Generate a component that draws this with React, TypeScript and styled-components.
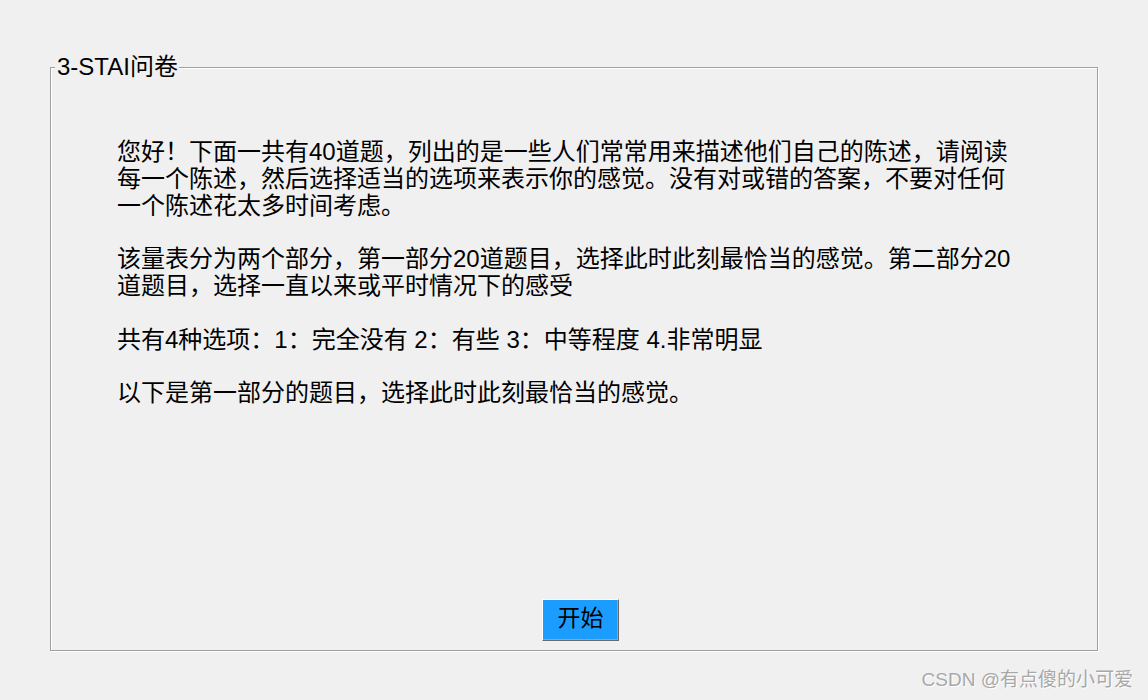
import React from 'react';
import styled, { createGlobalStyle } from 'styled-components';

const GlobalStyle = createGlobalStyle`
  html, body {
    margin: 0;
    padding: 0;
    background: #f0f0f0;
  }
  body {
    font-family: "Liberation Sans", "Noto Sans CJK SC", sans-serif;
    color: #000;
  }
`;

const Page = styled.div`
  position: relative;
  box-sizing: border-box;
  height: 700px;
  padding: 55px 50px 49px 50px;
  display: flex;
  flex-direction: column;
  overflow: hidden;
`;

const GroupBox = styled.fieldset`
  flex: 1;
  margin: 0;
  padding: 0;
  min-width: 0;
  border: 1px solid #a0a0a0;
  box-shadow: inset 1px 1px 0 #fff, 1px 1px 0 #fff;
  display: flex;
  flex-direction: column;
`;

const Title = styled.legend`
  margin-left: 4px;
  padding: 0 1px 0 2px;
  font-size: 24px;
  line-height: 24px;
  background: #f0f0f0;
`;

const Intro = styled.div`
  margin-top: 60px;
  padding-left: 66px;
  font-size: 24px;
  line-height: 26.8px;
`;

const Para = styled.p`
  margin: 0 0 26.8px 0;
  white-space: nowrap;
`;

const StartButton = styled.button`
  margin: auto 0 9px 491px;
  align-self: flex-start;
  width: 77px;
  height: 42px;
  padding: 0 0 4px 0;
  font-family: "Liberation Sans", "Noto Sans CJK SC", sans-serif;
  font-size: 23px;
  line-height: 28px;
  color: #000;
  background: #1a9dff;
  border-top: 1px solid #fff;
  border-left: 1px solid #fff;
  border-right: 1px solid #696969;
  border-bottom: 1px solid #696969;
  box-shadow: inset -1px -1px 0 #a0a0a0;
  cursor: pointer;
`;

const Watermark = styled.div`
  position: absolute;
  right: 15px;
  bottom: 8px;
  font-size: 19px;
  line-height: 24px;
  color: #a8a8a8;
  text-shadow: 1px 1px 0 #fff;
  white-space: nowrap;
`;

const paragraphs: string[][] = [
  [
    '您好！下面一共有40道题，列出的是一些人们常常用来描述他们自己的陈述，请阅读',
    '每一个陈述，然后选择适当的选项来表示你的感觉。没有对或错的答案，不要对任何',
    '一个陈述花太多时间考虑。',
  ],
  [
    '该量表分为两个部分，第一部分20道题目，选择此时此刻最恰当的感觉。第二部分20',
    '道题目，选择一直以来或平时情况下的感受',
  ],
  ['共有4种选项：1：完全没有 2：有些 3：中等程度 4.非常明显'],
  ['以下是第一部分的题目，选择此时此刻最恰当的感觉。'],
];

const App: React.FC = () => {
  return (
    <>
      <GlobalStyle />
      <Page>
        <GroupBox>
          <Title>3-STAI问卷</Title>
          <Intro>
            {paragraphs.map((lines, i) => (
              <Para key={i}>
                {lines.map((line, j) => (
                  <React.Fragment key={j}>
                    {line}
                    {j < lines.length - 1 && <br />}
                  </React.Fragment>
                ))}
              </Para>
            ))}
          </Intro>
          <StartButton>开始</StartButton>
        </GroupBox>
        <Watermark>CSDN @有点傻的小可爱</Watermark>
      </Page>
    </>
  );
};

export default App;
